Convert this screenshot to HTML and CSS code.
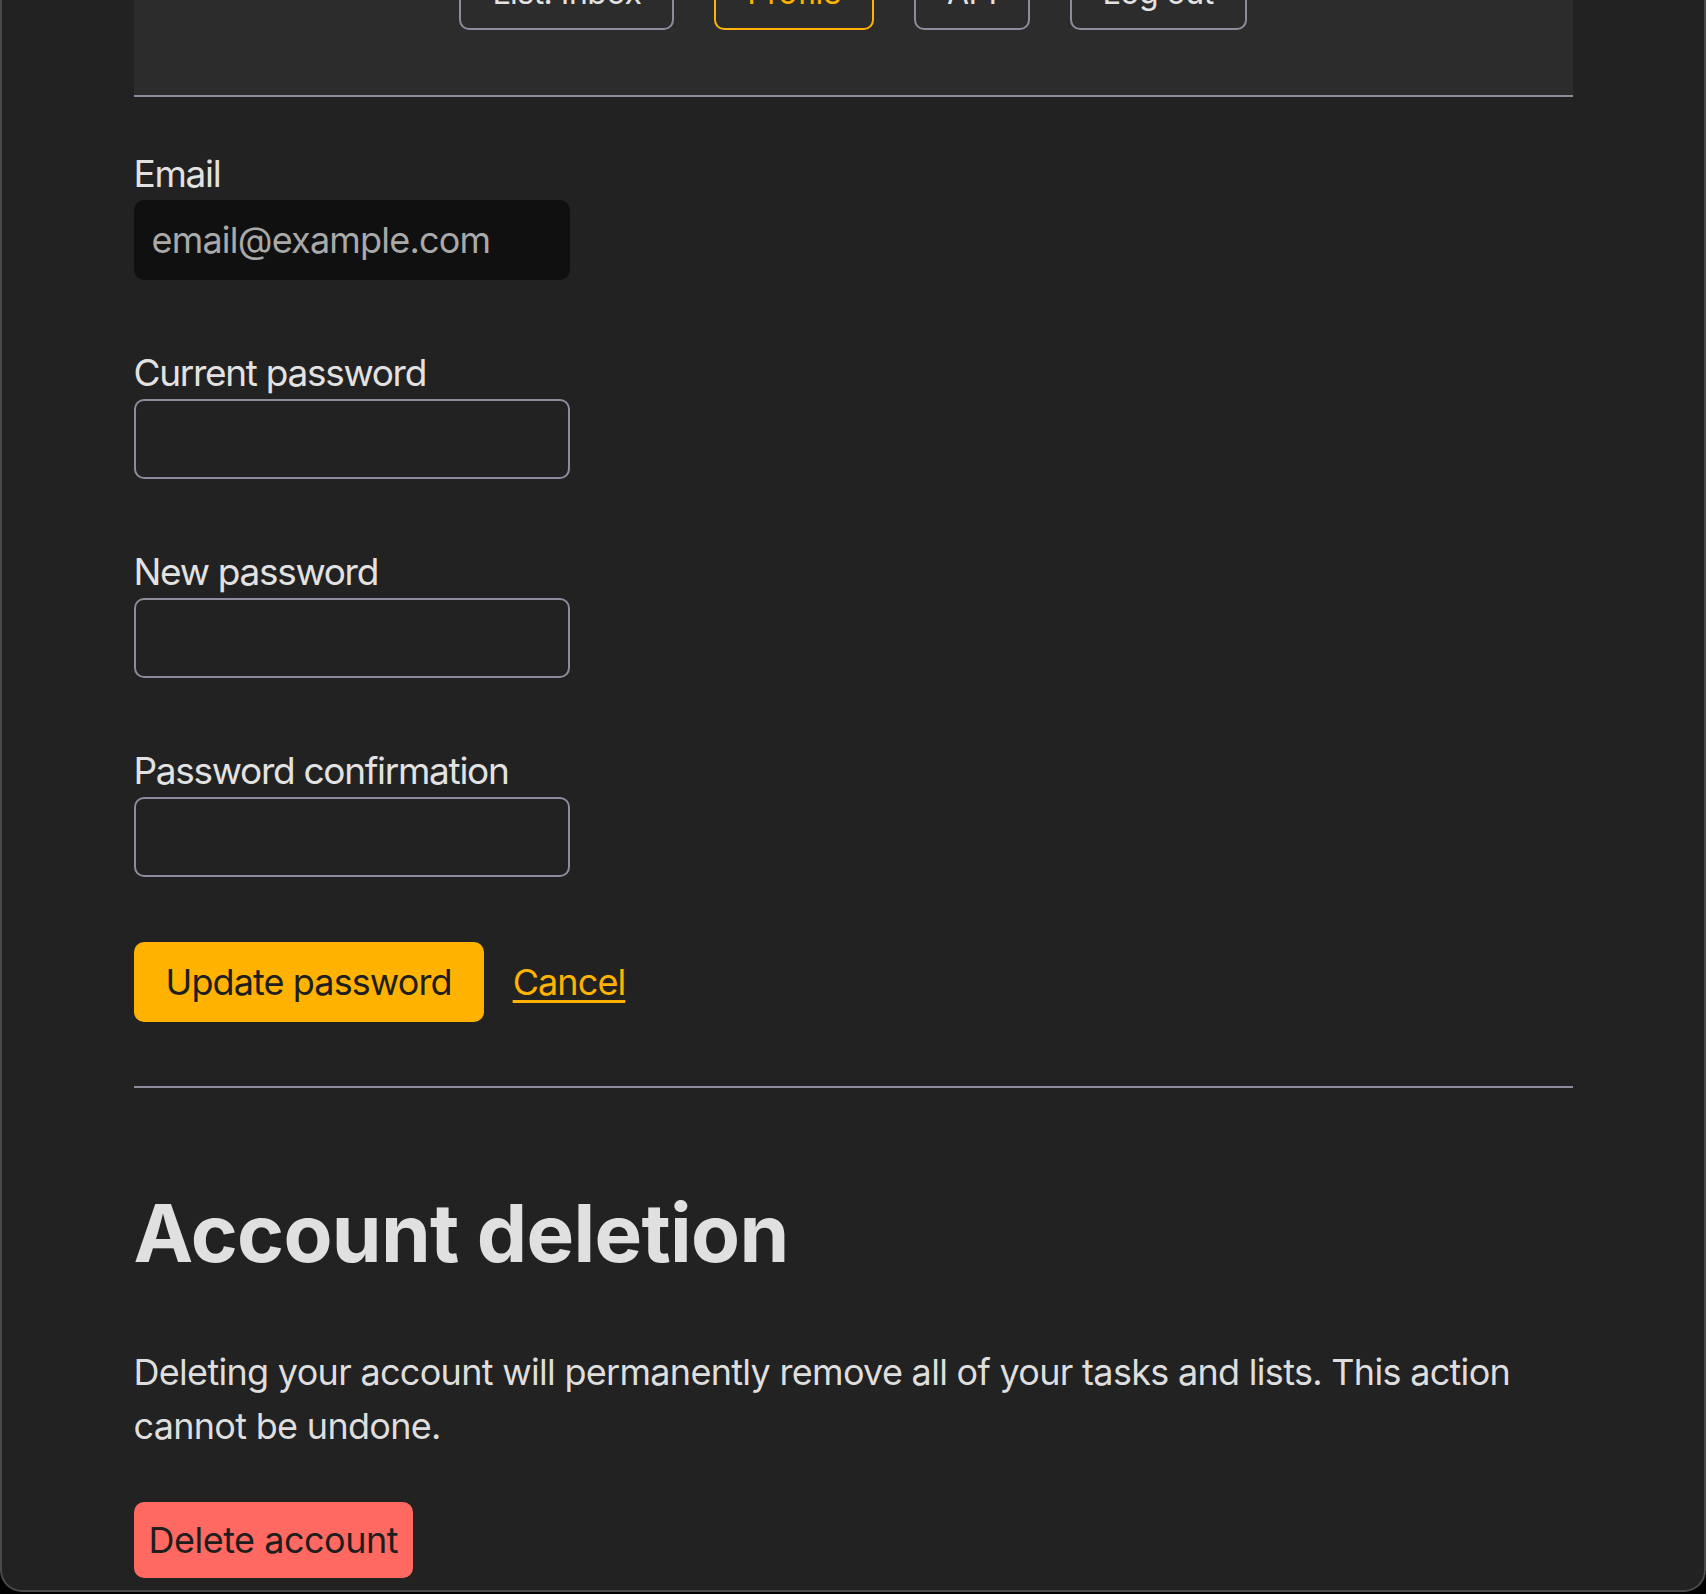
FILE: index.html
```html
<!DOCTYPE html>
<html lang="en">
<head>
<meta charset="utf-8">
<title>Profile</title>
<link rel="stylesheet" href="styles.css">
</head>
<body>
<div class="window">
  <div class="page">
    <header class="header">
      <nav class="nav">
        <a class="nav-btn" href="#">List: Inbox</a>
        <a class="nav-btn active" href="#">Profile</a>
        <a class="nav-btn" href="#">API</a>
        <a class="nav-btn" href="#">Log out</a>
      </nav>
    </header>

    <form class="form">
      <div class="fields">
        <div class="field">
          <label class="label" for="email">Email</label>
          <input class="input input-readonly" id="email" type="email" value="email@example.com" readonly>
        </div>
        <div class="field">
          <label class="label" for="current">Current password</label>
          <input class="input" id="current" type="password">
        </div>
        <div class="field">
          <label class="label" for="new">New password</label>
          <input class="input" id="new" type="password">
        </div>
        <div class="field">
          <label class="label" for="confirm">Password confirmation</label>
          <input class="input" id="confirm" type="password">
        </div>
      </div>
      <div class="actions">
        <button class="btn btn-primary" type="button">Update password</button>
        <a class="link" href="#">Cancel</a>
      </div>
    </form>

    <hr class="divider">

    <section class="danger">
      <h1 class="heading">Account deletion</h1>
      <p class="text">Deleting your account will permanently remove all of your tasks and lists. This action cannot be undone.</p>
      <button class="btn btn-danger" type="button">Delete account</button>
    </section>
  </div>
</div>
</body>
</html>
```

FILE: styles.css
```css
* { box-sizing: border-box; }

html, body {
  margin: 0;
  padding: 0;
  background: #000;
}

body {
  font-family: Inter, "Noto Sans", "Liberation Sans", sans-serif;
  color: #e2e2e2;
}

.window {
  height: 1592px;
  background: #222222;
  border: 2px solid #4a4a4a;
  border-top: none;
  border-radius: 0 0 22px 22px;
  overflow: hidden;
}

.page {
  width: 1439px;
  margin: 0 auto;
}

.header {
  background: #2c2c2c;
  border-bottom: 2px solid #8c8c9c;
  padding-bottom: 65px;
}

.nav {
  display: flex;
  justify-content: center;
  gap: 40px;
  margin-top: -50px;
}

.nav-btn {
  display: block;
  font-size: 32px;
  line-height: 48px;
  letter-spacing: -0.5px;
  padding: 17px 31px 11px;
  border: 2px solid #8c8c9c;
  border-radius: 10px;
  color: #e2e2e2;
  text-decoration: none;
}

.nav-btn.active {
  border-color: #ffb300;
  color: #ffb300;
}

.form {
  padding-top: 53px;
}

.fields {
  display: flex;
  flex-direction: column;
  gap: 69px;
}

.label {
  display: block;
  font-size: 37px;
  line-height: 48px;
  letter-spacing: -1.3px;
  margin-bottom: 2px;
  color: #e2e2e2;
}

.input {
  display: block;
  width: 436px;
  height: 80px;
  border: 2px solid #8c8c9c;
  border-radius: 10px;
  background: #222222;
  color: #e2e2e2;
  font-family: inherit;
  font-size: 36px;
  letter-spacing: -0.8px;
  padding: 0 16px;
  outline: none;
}

.input-readonly {
  background: #101010;
  border-color: #101010;
  color: #a9a9a9;
}

.actions {
  display: flex;
  align-items: center;
  gap: 29px;
  margin-top: 65px;
}

.btn {
  font-family: inherit;
  border: none;
  border-radius: 10px;
  color: #1e1e1e;
  cursor: pointer;
}

.btn-primary {
  background: #ffb300;
  font-size: 36px;
  letter-spacing: -0.9px;
  line-height: 48px;
  padding: 16px 32px;
}

.link {
  color: #ffb300;
  font-size: 36px;
  letter-spacing: -0.9px;
  text-decoration: underline;
  text-decoration-thickness: 3px;
  text-underline-offset: 5px;
}

.divider {
  border: none;
  border-top: 2px solid #8c8c9c;
  margin: 64px 0 0;
}

.heading {
  font-size: 80px;
  line-height: 96px;
  font-weight: 700;
  color: #e0e0e0;
  margin: 97px 0 0;
  letter-spacing: -0.7px;
}

.text {
  font-size: 36px;
  line-height: 54px;
  letter-spacing: -0.7px;
  color: #dedede;
  margin: 64px 0 0;
}

.btn-danger {
  background: #ff6961;
  font-size: 36px;
  letter-spacing: -0.5px;
  line-height: 44px;
  padding: 16px 15px;
  margin-top: 49px;
}
```
